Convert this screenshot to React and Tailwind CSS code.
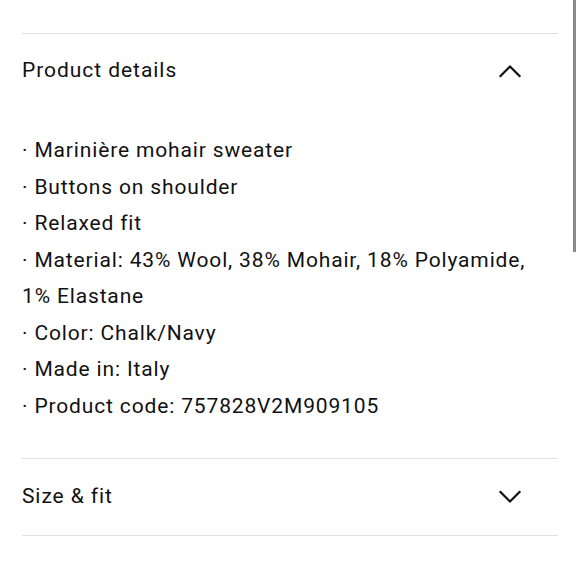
import React from "react";

const items = [
  "Marinière mohair sweater",
  "Buttons on shoulder",
  "Relaxed fit",
  "Material: 43% Wool, 38% Mohair, 18% Polyamide, 1% Elastane",
  "Color: Chalk/Navy",
  "Made in: Italy",
  "Product code: 757828V2M909105",
];

function Chevron({ up }) {
  return (
    <svg width="24" height="14" viewBox="0 0 24 14" fill="none" stroke="#111" strokeWidth="2.2" strokeLinecap="square">
      {up ? <path d="M2.5 12 L12 2.5 L21.5 12" /> : <path d="M2.5 2 L12 11.5 L21.5 2" />}
    </svg>
  );
}

export default function App() {
  return (
    <div className="relative w-[580px] h-[580px] bg-white overflow-hidden text-[#111]" style={{ fontFamily: "Roboto, 'Liberation Sans', sans-serif" }}>
      <div className="absolute right-[4px] top-0 w-[3px] h-[252px] bg-[#8a8a8a]" />
      <div className="pt-[33px] pl-[22px] pr-[22px]">
        <div className="border-t border-[#e0e0e0]">
          <div className="h-[74px] flex items-center justify-between pr-[36px]">
            <span className="text-[21px] tracking-[0.95px]">Product details</span>
            <Chevron up />
          </div>
          <ul className="pt-[24px] pb-[34px] text-[21px] leading-[36.5px] tracking-[0.85px]">
            {items.map((t) => (
              <li key={t}>· {t}</li>
            ))}
          </ul>
        </div>
        <div className="border-t border-b border-[#e0e0e0]">
          <div className="h-[76px] flex items-center justify-between pr-[36px]">
            <span className="text-[21px] tracking-[0.9px]">Size &amp; fit</span>
            <Chevron />
          </div>
        </div>
      </div>
    </div>
  );
}
